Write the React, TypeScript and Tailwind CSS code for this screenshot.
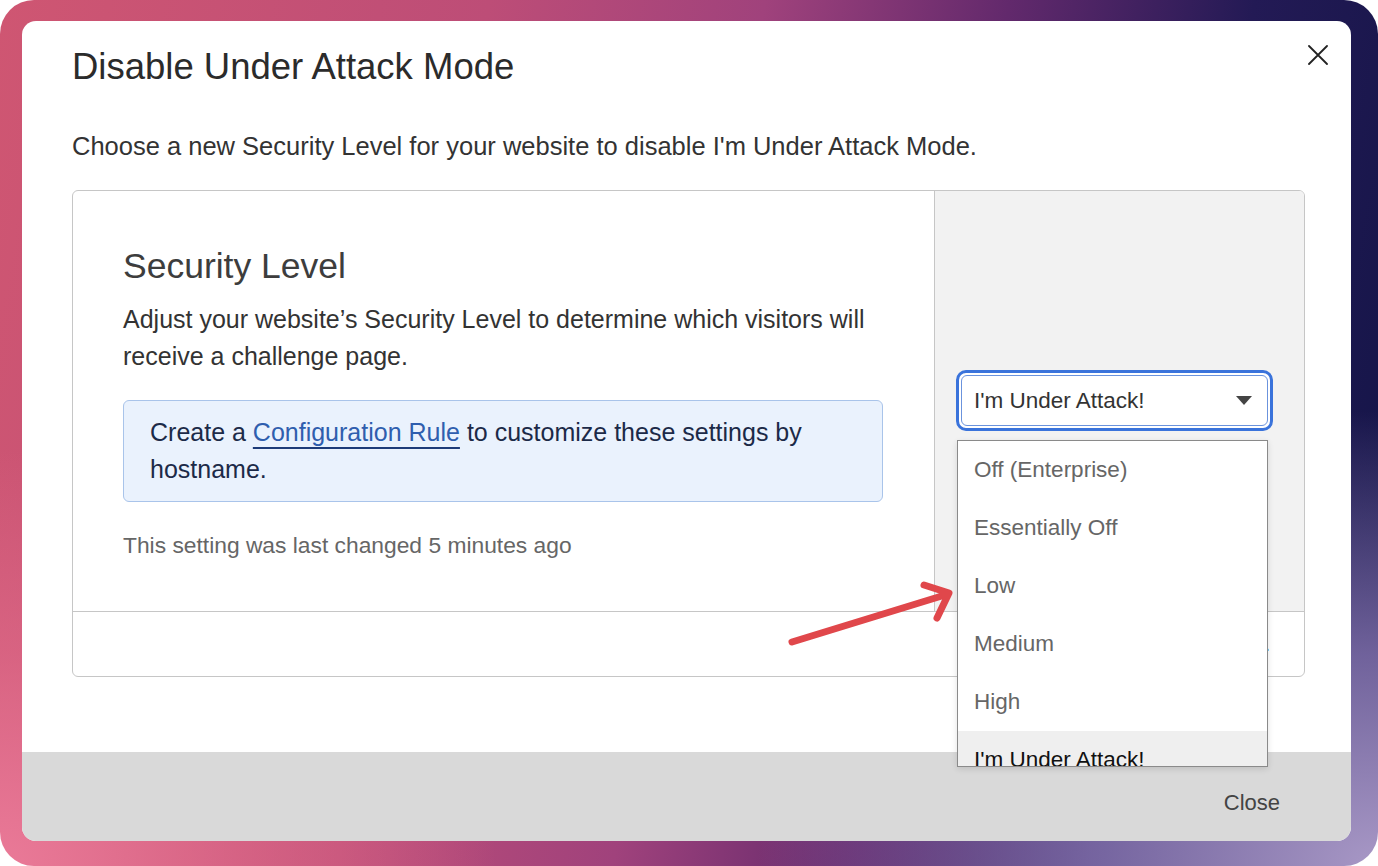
const levels = [
  "Off (Enterprise)",
  "Essentially Off",
  "Low",
  "Medium",
  "High",
  "I'm Under Attack!",
];

const selected = "I'm Under Attack!";

const App = () => {
  return (
    <div className="relative w-[1378px] h-[866px] overflow-hidden bg-white font-['Liberation_Sans',Arial,sans-serif]">
      <div className="h-full w-full rounded-[34px] pt-[21px] pl-[22px] pr-[27px] pb-[25px] bg-[radial-gradient(ellipse_60%_70%_at_100%_100%,#a898c6_0%,rgba(150,130,190,0.7)_35%,transparent_75%),radial-gradient(ellipse_45%_60%_at_0%_100%,#ea7a98_0%,rgba(226,110,140,0.6)_40%,transparent_80%),linear-gradient(100deg,#cf5672_0%,#bd4d77_32%,#a0427c_50%,#62296c_66%,#231a55_82%,#121446_100%)]">
        <div className="flex h-full flex-col overflow-hidden rounded-[14px] bg-white">
          <div className="flex-1 pl-[50px] pr-[46px]">
            <div className="flex items-start justify-between">
              <h1 className="mt-[24px] text-[36.5px] leading-[44px] text-[#2b2b2b]">
                Disable Under Attack Mode
              </h1>
              <button className="mt-[24px] mr-[-23px] h-[20px] w-[20px]">
                <svg viewBox="0 0 20 20" className="h-[20px] w-[20px]">
                  <path
                    d="M1 1 L19 19 M19 1 L1 19"
                    stroke="#222"
                    strokeWidth="1.8"
                    strokeLinecap="round"
                  />
                </svg>
              </button>
            </div>

            <p className="mt-[39px] text-[25.5px] leading-[36px] text-[#333]">
              Choose a new Security Level for your website to disable I'm Under
              Attack Mode.
            </p>

            <div className="mt-[26px] rounded-[6px] border border-[#c6c6c6]">
              <div className="flex h-[421px] border-b border-[#c6c6c6]">
                <div className="flex-1 pt-[53px] pl-[50px] pr-[51px]">
                  <h2 className="text-[35.5px] leading-[44px] text-[#3d3d3d]">
                    Security Level
                  </h2>
                  <p className="mt-[13px] text-[25px] leading-[37px] text-[#333]">
                    Adjust your website’s Security Level to determine which
                    visitors will receive a challenge page.
                  </p>
                  <div className="mt-[25px] rounded-[6px] border border-[#a9c4ea] bg-[#eaf2fd] px-[26px] pt-[13px] pb-[13px] text-[25px] leading-[37px] text-[#1c2a48]">
                    Create a{" "}
                    <a className="text-[#2f5eae] underline decoration-[#1d3b78] decoration-2 underline-offset-[6px]">
                      Configuration Rule
                    </a>{" "}
                    to customize these settings by hostname.
                  </div>
                  <p className="mt-[28px] text-[22.8px] leading-[30px] text-[#666]">
                    This setting was last changed 5 minutes ago
                  </p>
                </div>

                <div className="relative w-[370px] rounded-tr-[5px] border-l border-[#c6c6c6] bg-[#f2f2f2] pt-[179px] pl-[21px]">
                  <div className="h-[61px] w-[317px] rounded-[10px] border-[3px] border-[#3a73db] bg-white p-[2px]">
                    <div className="flex h-full items-center justify-between rounded-[6px] border border-[#6b93dd] pl-[12px] pr-[15px]">
                      <span className="text-[22.5px] leading-[30px] text-[#333]">
                        {selected}
                      </span>
                      <svg viewBox="0 0 16 9" className="h-[9px] w-[16px]">
                        <path d="M0 0 L16 0 L8 9 Z" fill="#444" />
                      </svg>
                    </div>
                  </div>

                  <div className="absolute left-[22px] top-[249px] z-10 h-[327px] w-[311px] overflow-hidden border border-[#8a8a8a] bg-white shadow-[0_2px_6px_rgba(0,0,0,0.12)]">
                    {levels.map((level) => (
                      <div
                        key={level}
                        className={
                          level === selected
                            ? "flex h-[58px] items-center bg-[#efefef] pl-[16px] text-[22.5px] text-[#111]"
                            : "flex h-[58px] items-center pl-[16px] text-[22.5px] text-[#666]"
                        }
                      >
                        {level}
                      </div>
                    ))}
                  </div>
                </div>
              </div>

              <div className="flex h-[64px] items-center justify-end pr-[34px]">
                <a className="text-[20px] text-[#2f5eae]">Help.</a>
              </div>
            </div>
          </div>

          <div className="flex h-[89px] justify-end bg-[#d9d9d9] pt-[36px] pr-[71px]">
            <span className="text-[22px] leading-[30px] text-[#444]">Close</span>
          </div>
        </div>
      </div>

      <svg
        viewBox="0 0 180 80"
        className="pointer-events-none absolute left-[780px] top-[575px] h-[80px] w-[180px]"
      >
        <path
          d="M12 67 L165 20 M144 10 L169 18 L157 43"
          fill="none"
          stroke="#e0474b"
          strokeWidth="7"
          strokeLinecap="round"
          strokeLinejoin="round"
        />
      </svg>
    </div>
  );
};

export default App;
